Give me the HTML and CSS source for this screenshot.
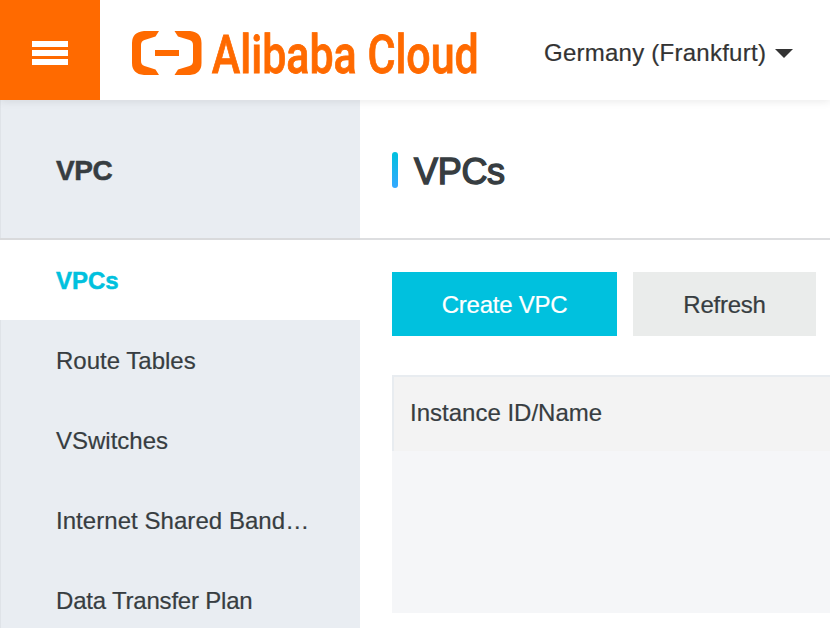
FILE: index.html
```html
<!DOCTYPE html>
<html lang="en">
<head>
<meta charset="utf-8">
<title>Alibaba Cloud VPC</title>
<link rel="stylesheet" href="styles.css">
</head>
<body>
<header class="topbar">
  <button class="menu" aria-label="Menu"><span></span><span></span><span></span></button>
  <svg class="logo" width="356" height="90" viewBox="130 8 356 90" fill="#ff6a00">
    <path d="M159 31H144Q132 32 132 43V63Q132 74 144 75H159L155.500 69.500L144.500 66Q141 65 141 61V45Q141 41 144.500 40L155.500 36.500Z"/>
    <path d="M174.500 31H190Q201.500 32 201.500 43V63Q201.500 74 190 75H174.500L178 69.500L189.500 66Q193 65 193 61V45Q193 41 189.500 40L178 36.500Z"/>
    <path d="M155 50H179V56H155Z"/>
    <text class="wordmark" transform="translate(211.800 73) scale(.79 1)" textLength="338" lengthAdjust="spacingAndGlyphs">Alibaba Cloud</text>
  </svg>
  <div class="region"><span>Germany (Frankfurt)</span><i class="caret"></i></div>
</header>
<div class="layout">
  <nav class="sidebar">
    <div class="product">VPC</div>
    <a class="item active"><span>VPCs</span></a>
    <a class="item"><span>Route Tables</span></a>
    <a class="item"><span>VSwitches</span></a>
    <a class="item"><span class="bandwidth">Internet Shared Band…</span></a>
    <a class="item"><span class="plan">Data Transfer Plan</span></a>
  </nav>
  <main class="main">
    <div class="heading"><i class="bar"></i><h1>VPCs</h1></div>
    <div class="content">
      <div class="actions">
        <button class="btn primary">Create VPC</button>
        <button class="btn">Refresh</button>
      </div>
      <div class="table">
        <div class="thead">Instance ID/Name</div>
        <div class="tbody"></div>
      </div>
    </div>
  </main>
</div>
</body>
</html>
```
FILE: styles.css
```css
* { box-sizing: border-box; }
body {
  margin: 0;
  height: 628px;
  overflow: hidden;
  background: #fff;
  color: #373d41;
  font: 24px/36px "Liberation Sans", Arial, sans-serif;
  -webkit-text-stroke: .2px currentColor;
}
button { border: 0; padding: 0; font: inherit; color: inherit; }
.topbar {
  position: relative;
  display: flex;
  align-items: center;
  height: 100px;
  background: #fff;
  box-shadow: 0 2px 8px rgba(0, 0, 0, .08);
}
.menu {
  display: flex;
  flex-direction: column;
  justify-content: center;
  align-items: center;
  gap: 3.500px;
  width: 100px;
  height: 100px;
  padding-top: 6px;
  background: #ff6a00;
}
.menu span { width: 36px; height: 5.500px; background: #fff; }
.logo { flex: none; margin: 6px 0 0 30px; }
.wordmark {
  font: 500 54px Roboto, sans-serif;
  stroke: #ff6a00;
  stroke-width: .8px;
}
.region {
  display: flex;
  align-items: center;
  gap: 9px;
  margin: 6px 0 0 58px;
  color: #333;
  letter-spacing: .25px;
  white-space: nowrap;
}
.caret { border: 9px solid transparent; border-top-color: #333; border-bottom: 0; }
.layout { display: flex; height: 528px; }
.sidebar {
  width: 360px;
  background: #e9edf2;
  box-shadow: inset 1px 0 #dfe3e8;
}
.product {
  height: 140px;
  padding: 53px 56px 0;
  border-bottom: 2px solid #d9dadc;
  font-size: 28px;
  font-weight: 700;
  letter-spacing: -.4px;
  -webkit-text-stroke-width: .5px;
}
.item {
  display: flex;
  align-items: center;
  height: 80px;
  padding: 2px 50px 0 56px;
}
.item span { white-space: nowrap; }
.bandwidth { letter-spacing: .05px; }
.plan { letter-spacing: -.2px; }
.active { background: #fff; color: #00c1de; font-weight: 700; -webkit-text-stroke-width: .5px; }
.main { flex: 1; min-width: 0; }
.heading {
  display: flex;
  gap: 16px;
  height: 140px;
  padding: 52px 32px 0;
  border-bottom: 2px solid #dddee0;
}
.bar { width: 6px; height: 36px; border-radius: 3px; background: linear-gradient(#00c1de, #35a8ff); }
h1 {
  margin: 1px 0 0;
  font-size: 36px;
  line-height: 38px;
  font-weight: 400;
  letter-spacing: -.3px;
  -webkit-text-stroke: 1.400px #373d41;
}
.content { padding: 32px 0 0 32px; }
.actions { display: flex; gap: 16px; }
.btn { width: 183px; height: 64px; padding-top: 2px; background: #eaeceb; letter-spacing: -.25px; }
.btn.primary { width: 225px; background: #00c1de; color: #fff; }
.table { margin-top: 39px; }
.thead {
  height: 76px;
  padding: 18px 16px 0;
  border-top: 2px solid #e8ecf0;
  border-left: 2px solid #e8ecf0;
  background: #f3f3f3;
}
.tbody { height: 162px; background: #f5f6f8; }
```
